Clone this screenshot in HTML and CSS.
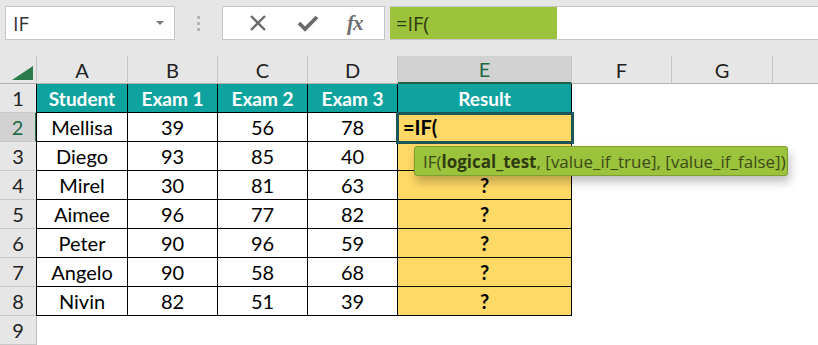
FILE: index.html
```html
<!DOCTYPE html>
<html lang="en">
<head>
<meta charset="utf-8">
<title>IF function</title>
<link rel="stylesheet" href="styles.css">
</head>
<body>
<div class="app">
  <div class="toolbar">
    <div class="namebox">
      <span class="namebox-text">IF</span>
      <span class="dropdown"></span>
    </div>
    <div class="grip"><i></i><i></i><i></i></div>
    <div class="fxbox">
      <svg class="ico" width="22" height="22" viewBox="0 0 22 22"><path d="M4 4 L18 18 M18 4 L4 18" stroke="#6a6a6a" stroke-width="2.4" fill="none"/></svg>
      <svg class="ico" width="24" height="22" viewBox="0 0 24 22"><path d="M3 11 L9 17 L21 5" stroke="#6a6a6a" stroke-width="3.8" fill="none" stroke-linejoin="miter"/></svg>
      <span class="fx">fx</span>
    </div>
    <div class="formula">
      <div class="formula-edit">=IF(</div>
      <div class="formula-rest"></div>
    </div>
  </div>
  <div class="sheet">
    <div class="corner"><span class="tri"></span></div>
    <div class="colhead">A</div>
    <div class="colhead">B</div>
    <div class="colhead">C</div>
    <div class="colhead">D</div>
    <div class="colhead sel">E</div>
    <div class="colhead">F</div>
    <div class="colhead">G</div>
    <div class="colhead last"></div>

    <div class="rowhead">1</div>
    <div class="cell th first">Student</div>
    <div class="cell th">Exam 1</div>
    <div class="cell th">Exam 2</div>
    <div class="cell th">Exam 3</div>
    <div class="cell th">Result</div>
    <div class="blank"></div><div class="blank"></div><div class="blank"></div>

    <div class="rowhead sel">2</div>
    <div class="cell first">Mellisa</div>
    <div class="cell">39</div>
    <div class="cell">56</div>
    <div class="cell">78</div>
    <div class="cell res edit">=IF(</div>
    <div class="blank"></div><div class="blank"></div><div class="blank"></div>

    <div class="rowhead">3</div>
    <div class="cell first">Diego</div>
    <div class="cell">93</div>
    <div class="cell">85</div>
    <div class="cell">40</div>
    <div class="cell res"></div>
    <div class="blank"></div><div class="blank"></div><div class="blank"></div>

    <div class="rowhead">4</div>
    <div class="cell first">Mirel</div>
    <div class="cell">30</div>
    <div class="cell">81</div>
    <div class="cell">63</div>
    <div class="cell res q">?</div>
    <div class="blank"></div><div class="blank"></div><div class="blank"></div>

    <div class="rowhead">5</div>
    <div class="cell first">Aimee</div>
    <div class="cell">96</div>
    <div class="cell">77</div>
    <div class="cell">82</div>
    <div class="cell res q">?</div>
    <div class="blank"></div><div class="blank"></div><div class="blank"></div>

    <div class="rowhead">6</div>
    <div class="cell first">Peter</div>
    <div class="cell">90</div>
    <div class="cell">96</div>
    <div class="cell">59</div>
    <div class="cell res q">?</div>
    <div class="blank"></div><div class="blank"></div><div class="blank"></div>

    <div class="rowhead">7</div>
    <div class="cell first">Angelo</div>
    <div class="cell">90</div>
    <div class="cell">58</div>
    <div class="cell">68</div>
    <div class="cell res q">?</div>
    <div class="blank"></div><div class="blank"></div><div class="blank"></div>

    <div class="rowhead">8</div>
    <div class="cell first">Nivin</div>
    <div class="cell">82</div>
    <div class="cell">51</div>
    <div class="cell">39</div>
    <div class="cell res q">?</div>
    <div class="blank"></div><div class="blank"></div><div class="blank"></div>

    <div class="rowhead">9</div>
    <div class="blank"></div><div class="blank"></div><div class="blank"></div><div class="blank"></div>
    <div class="blank"></div><div class="blank"></div><div class="blank"></div><div class="blank"></div>

    <div class="active-cell"></div>
    <div class="tooltip">IF(<b>logical_test</b>, [value_if_true], [value_if_false])</div>
  </div>
</div>
</body>
</html>
```

FILE: styles.css
```css
* { box-sizing: border-box; }
html, body { margin: 0; padding: 0; background: #ffffff; }
body { width: 818px; height: 345px; overflow: hidden; }

.app { width: 818px; height: 345px; display: flex; flex-direction: column; }

.toolbar {
  height: 56px;
  flex: none;
  background: #e6e6e6;
  display: flex;
  align-items: flex-start;
  padding-top: 6px;
  padding-left: 5px;
  font-family: "Open Sans", "Noto Sans", sans-serif;
}

.namebox {
  width: 170px;
  height: 34px;
  background: #fff;
  border: 1px solid #c6c6c6;
  display: flex;
  align-items: center;
  justify-content: space-between;
  padding: 0 10px 0 7px;
}
.namebox-text { font-size: 20px; color: #333; }
.dropdown {
  width: 0; height: 0;
  border-left: 4px solid transparent;
  border-right: 4px solid transparent;
  border-top: 4px solid #777;
}

.grip {
  width: 47px;
  height: 34px;
  display: flex;
  flex-direction: column;
  align-items: center;
  justify-content: center;
  gap: 3px;
}
.grip i { display: block; width: 3px; height: 3px; background: #b4b4b4; }

.fxbox {
  width: 163px;
  height: 34px;
  background: #fff;
  border: 1px solid #c6c6c6;
  display: flex;
  align-items: center;
  justify-content: space-around;
  padding: 0 8px 0 10px;
}
.fx {
  font-family: "Liberation Serif", "DejaVu Serif", serif;
  font-style: italic;
  font-weight: 700;
  font-size: 21px;
  color: #6f6f6f;
  letter-spacing: -1px;
}

.formula {
  margin-left: 5px;
  flex: 1;
  height: 34px;
  display: flex;
  border-top: 1px solid #c6c6c6;
  border-bottom: 1px solid #c6c6c6;
}
.formula-edit {
  width: 167px;
  background: #9bc33c;
  color: #2f3a12;
  font-size: 20px;
  padding-left: 6px;
  display: flex;
  align-items: center;
}
.formula-rest { flex: 1; background: #fff; }

.sheet {
  position: relative;
  flex: 1;
  display: grid;
  grid-template-columns: 37px 91px 90px 90px 90px 174px 100px 101px 1fr;
  grid-template-rows: 28px repeat(9, 29px);
  font-family: "Lato", "Liberation Sans", sans-serif;
  font-size: 20px;
  color: #000;
}

.corner {
  background: #e6e6e6;
  border-right: 1px solid #c6c6c6;
  border-bottom: 1px solid #b0b0b0;
  position: relative;
}
.tri {
  position: absolute;
  right: 3px;
  bottom: 3px;
  width: 0; height: 0;
  border-left: 21px solid transparent;
  border-bottom: 14px solid #2b7a4b;
}

.colhead {
  background: #e6e6e6;
  border-right: 1px solid #c6c6c6;
  border-bottom: 1px solid #b0b0b0;
  display: flex;
  align-items: center;
  justify-content: center;
  font-size: 20px;
  color: #222;
}
.colhead.sel {
  background: #d2d2d2;
  color: #1e6a45;
  border-bottom: 2px solid #1f5f4e;
}
.colhead.last { border-right: none; }

.rowhead {
  background: #e6e6e6;
  border-right: 1px solid #bdbdbd;
  border-bottom: 1px solid #c8c8c8;
  display: flex;
  align-items: center;
  justify-content: center;
  font-size: 20px;
  color: #222;
}
.rowhead.sel {
  background: #d2d2d2;
  color: #1e6a45;
  border-right: 2px solid #217346;
}

.cell {
  border-right: 1px solid #000;
  border-bottom: 1px solid #000;
  display: flex;
  align-items: center;
  justify-content: center;
  white-space: nowrap;
}
.cell.first { border-left: 1px solid #000; margin-left: -1px; }
.cell.th {
  background: #0fa3a0;
  color: #fff;
  font-weight: 700;
  font-size: 19px;
}
.cell.res { background: #fed966; }
.cell.q { font-weight: 700; }
.cell.edit {
  justify-content: flex-start;
  padding-left: 5px;
  font-weight: 700;
}

.blank { background: #fff; }

.active-cell {
  position: absolute;
  left: 396px;
  top: 56px;
  width: 178px;
  height: 32px;
  border: 3px solid #1d5656;
  pointer-events: none;
}

.tooltip {
  position: absolute;
  left: 414px;
  top: 90px;
  width: 374px;
  height: 30px;
  background: #9bc33c;
  border: 1px solid #7f9f32;
  border-radius: 3px;
  box-shadow: 2px 6px 10px rgba(0,0,0,0.25);
  font-family: "Open Sans", "Noto Sans", sans-serif;
  font-size: 17px;
  color: #3e4a18;
  padding-left: 8px;
  display: flex;
  align-items: center;
  white-space: nowrap;
}
.tooltip b { color: #2f3a10; }
```
